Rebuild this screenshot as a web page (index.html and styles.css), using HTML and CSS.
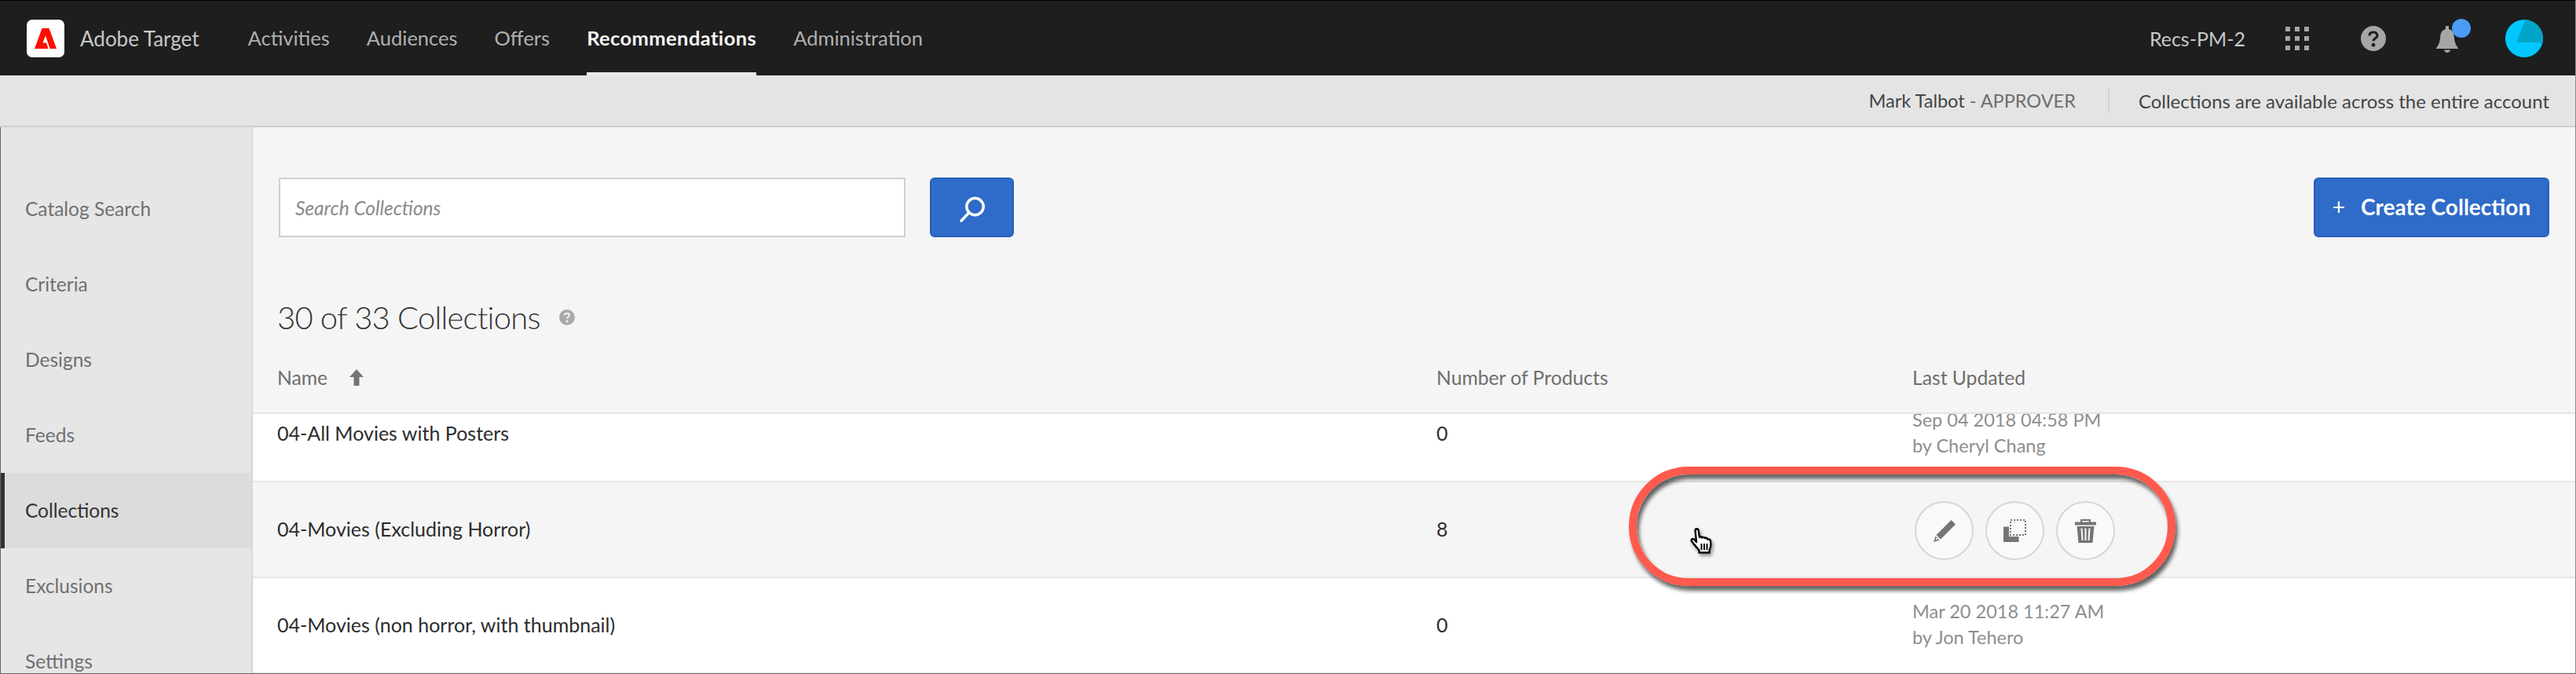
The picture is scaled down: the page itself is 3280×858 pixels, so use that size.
FILE: index.html
```html
<!DOCTYPE html>
<html lang="en">

<head>
    <meta charset="UTF-8">
    <meta name="viewport" content="width=device-width, initial-scale=1.0">
    <title>Collections - Adobe Target</title>
    <link rel="stylesheet" href="styles.css">
</head>

<body>
    <div class="app">
        <header class="topbar">
            <div class="logo">
                <svg viewBox="0 0 28 26" width="28" height="26">
                    <path fill="#fa0f00" d="M9.5 0H18.5L28 26H19.6L14 9.5L10.4 18.6H15L17.5 26H0Z" />
                </svg>
            </div>
            <span class="product">Adobe Target</span>
            <nav class="nav">
                <a class="nav-item">Activities</a>
                <a class="nav-item">Audiences</a>
                <a class="nav-item">Offers</a>
                <a class="nav-item active">Recommendations</a>
                <a class="nav-item">Administration</a>
            </nav>
            <div class="top-right">
                <span class="account">Recs-PM-2</span>
                <svg class="icon-grid" viewBox="0 0 30 30" width="30" height="30">
                    <g fill="#a6a6a6">
                        <rect x="0" y="0" width="6" height="6" /><rect x="12" y="0" width="6" height="6" /><rect x="24" y="0" width="6" height="6" />
                        <rect x="0" y="12" width="6" height="6" /><rect x="12" y="12" width="6" height="6" /><rect x="24" y="12" width="6" height="6" />
                        <rect x="0" y="24" width="6" height="6" /><rect x="12" y="24" width="6" height="6" /><rect x="24" y="24" width="6" height="6" />
                    </g>
                </svg>
                <svg class="icon-help" viewBox="0 0 32 32" width="32" height="32">
                    <circle cx="16" cy="16" r="16" fill="#a6a6a6" />
                    <path d="M11 12.5C11 9.5 13.2 8 16 8s5 1.6 5 4.2c0 3.6-5 3.6-5 7" fill="none" stroke="#1e1e1e" stroke-width="3.2" />
                    <circle cx="16" cy="24.2" r="2.4" fill="#1e1e1e" />
                </svg>
                <div class="bell">
                    <svg viewBox="0 0 28 34" width="28" height="34">
                        <path fill="#a6a6a6" d="M12 0h4v4c5 1.4 6.5 5.5 6.8 10 .3 5 1.400 9.500 5.200 14.500V29H0v-.5C3.800 23.500 4.900 19 5.200 14 5.500 9.500 7 5.400 12 4Z" />
                        <path fill="#a6a6a6" d="M10 30.500h8c-.4 2.200-2 3.500-4 3.500s-3.600-1.300-4-3.500Z" />
                    </svg>
                    <span class="bell-dot"></span>
                </div>
                <svg class="avatar" viewBox="0 0 48 48" width="48" height="48">
                    <circle cx="24" cy="24" r="24" fill="#00c8ff" />
                    <path fill="#00a5c9" d="M14 29L25.500 0.100A24 24 0 0 1 48 24.500 24 24 0 0 1 47 31L43 29Z" />
                </svg>
            </div>
        </header>

        <div class="subbar">
            <span class="user"><span class="user-name">Mark Talbot</span> - APPROVER</span>
            <span class="subbar-note">Collections are available across the entire account</span>
        </div>

        <div class="main">
            <aside class="sidebar">
                <a class="side-item">Catalog Search</a>
                <a class="side-item">Criteria</a>
                <a class="side-item">Designs</a>
                <a class="side-item">Feeds</a>
                <a class="side-item active">Collections</a>
                <a class="side-item">Exclusions</a>
                <a class="side-item">Settings</a>
            </aside>

            <section class="content">
                <div class="toolbar">
                    <div class="search-input">Search Collections</div>
                    <button class="search-btn">
                        <svg viewBox="0 0 32 38" width="32" height="38">
                            <circle cx="19.500" cy="18" r="10.700" fill="none" stroke="#fff" stroke-width="3.500" />
                            <path d="M11.500 26L2 36" fill="none" stroke="#fff" stroke-width="3.500" stroke-linecap="round" />
                        </svg>
                    </button>
                    <button class="create-btn"><span class="plus">+</span>Create Collection</button>
                </div>

                <h1 class="title">30 of 33 Collections
                    <svg class="title-help" viewBox="0 0 20 20" width="20" height="20">
                        <circle cx="10" cy="10" r="10" fill="#a9a9a9" />
                        <path d="M7 7.500C7 5.700 8.300 4.800 10 4.800s3 1 3 2.500c0 2.100-3 2.100-3 4.200" fill="none" stroke="#f5f5f5" stroke-width="2" />
                        <circle cx="10" cy="15" r="1.500" fill="#f5f5f5" />
                    </svg>
                </h1>

                <div class="table-head">
                    <div class="th">Name
                        <svg class="sort" viewBox="0 0 18 21" width="18" height="21">
                            <path fill="#747474" d="M9 0L18 10H12.500V21H5.500V10H0Z" />
                        </svg>
                    </div>
                    <div class="th">Number of Products</div>
                    <div class="th">Last Updated</div>
                </div>

                <div class="table-body">
                    <div class="row first">
                        <div class="name">04-All Movies with Posters</div>
                        <div class="count">0</div>
                        <div class="updated">Sep 04 2018 04:58 PM<br>by Cheryl Chang</div>
                    </div>
                    <div class="row hover">
                        <div class="name">04-Movies (Excluding Horror)</div>
                        <div class="count">8</div>
                        <div class="actions">
                            <button class="round-btn">
                                <svg viewBox="0 0 28 28" width="28" height="28">
                                    <path fill="#747474" d="M22.500 0L28 5.500 9 24.500 3.500 19Z" />
                                    <path fill="#747474" d="M2.500 20.500L7.500 25.500 0 28Z" />
                                    <path fill="#f8f8f8" d="M3.400 22.400L5.600 24.600 2.500 25.500Z" />
                                </svg>
                            </button>
                            <button class="round-btn">
                                <svg viewBox="0 0 29 29" width="29" height="29">
                                    <path fill="#747474" d="M0 9.500H7V22H19.500V29H0Z" />
                                    <rect x="9" y="1" width="19" height="19" fill="none" stroke="#747474" stroke-width="2" stroke-dasharray="2 2" />
                                </svg>
                            </button>
                            <button class="round-btn">
                                <svg viewBox="0 0 27 30" width="27" height="30">
                                    <path fill="none" stroke="#747474" stroke-width="2" d="M8 4V1H19V4" />
                                    <path fill="#747474" d="M0 3.500H27V7.500H0Z" />
                                    <path fill="#747474" d="M2.500 9H24.500L22.500 30H4.500Z" />
                                    <path stroke="#f8f8f8" stroke-width="2" d="M8.500 11.500L9.500 27M13.500 11.500V27M18.500 11.500L17.500 27" />
                                </svg>
                            </button>
                        </div>
                    </div>
                    <div class="row">
                        <div class="name">04-Movies (non horror, with thumbnail)</div>
                        <div class="count">0</div>
                        <div class="updated">Mar 20 2018 11:27 AM<br>by Jon Tehero</div>
                    </div>
                </div>
            </section>
        </div>

        <!-- annotation drawn on top of the screenshot -->
        <div class="ring"></div>
        <svg class="cursor" viewBox="0 0 32 34" width="32" height="34">
            <path fill="#fff" stroke="#000" stroke-width="2.400" stroke-linejoin="round" d="M6.500 3C6.500 .6 10.500 .6 10.500 3L12 12C13 11 14.800 11 15.300 12.500C16.300 11.500 18.200 11.800 18.800 13C19.800 12.300 21.700 12.500 22.200 14.500C23.700 14 25.500 14.800 26 16.500C26.500 20 26.500 25 24.500 28.500V31.500H11.500V28.500C8.500 25 5 21 2 17C.8 15 3 13 5 14.500L8 18Z" />
            <path stroke="#000" stroke-width="2" d="M14.500 20V28M18 20V28M21.500 20V28" />
        </svg>
    </div>
</body>

</html>
```
FILE: styles.css
```css
* {
    box-sizing: border-box;
}

body {
    margin: 0;
    background: #fff;
    font-family: "Lato", "Liberation Sans", sans-serif;
    font-size: 24px;
    overflow: hidden;
}

.app {
    position: relative;
    width: 3280px;
    height: 858px;
    display: flex;
    flex-direction: column;
    overflow: hidden;
    border-right: 1px solid #8a8a8a;
    border-bottom: 1px solid #666;
}

/* top bar */
.topbar {
    height: 96px;
    flex: none;
    display: flex;
    align-items: center;
    background: #1e1e1e;
    border-top: 1px solid #000;
    padding-left: 34px;
    padding-right: 41px;
    color: #c8c8c8;
}

.logo {
    width: 48px;
    height: 48px;
    background: #fff;
    border-radius: 7px;
    display: flex;
    align-items: center;
    justify-content: center;
}

.product {
    margin-left: 20px;
    font-size: 26px;
    color: #c8c8c8;
}

.nav {
    display: flex;
    align-self: stretch;
    margin-left: 62px;
    gap: 47px;
    font-size: 25.5px;
}

.nav-item {
    display: flex;
    align-items: center;
    color: #b0b0b0;
    border-bottom: 4px solid transparent;
    padding-top: 3px;
}

.nav-item.active {
    color: #f5f5f5;
    font-weight: 700;
    letter-spacing: 0.4px;
    border-bottom-color: #e8e8e8;
}

.top-right {
    margin-left: auto;
    display: flex;
    align-items: center;
}

.account {
    margin-right: 51px;
    font-size: 25px;
}

.icon-help {
    margin-left: 66px;
}

.bell {
    position: relative;
    display: flex;
    margin-left: 64px;
    margin-top: 2px;
}

.bell-dot {
    position: absolute;
    left: 20px;
    top: -9px;
    width: 24px;
    height: 24px;
    border-radius: 50%;
    background: #4b9cf5;
}

.avatar {
    margin-left: 60px;
}

/* sub bar */
.subbar {
    height: 66px;
    flex: none;
    display: flex;
    align-items: center;
    justify-content: flex-end;
    padding-right: 33px;
    background: #e4e4e4;
    border-bottom: 2px solid #d0d0d0;
    color: #6e6e6e;
}

.user {
    padding-right: 41px;
    height: 32px;
    line-height: 32px;
    font-size: 23.5px;
    border-right: 2px solid #d4d4d4;
}

.user-name {
    color: #444;
}

.subbar-note {
    margin-left: 37px;
    color: #444;
}

/* side nav */
.main {
    flex: 1;
    display: flex;
    min-height: 0;
}

.sidebar {
    width: 322px;
    flex: none;
    padding-top: 56px;
    background: #e6e6e6;
    border-right: 2px solid #d8d8d8;
    border-left: 1px solid #666;
    overflow: hidden;
}

.side-item {
    display: flex;
    align-items: center;
    height: 96px;
    flex: none;
    padding-left: 31px;
    padding-bottom: 2px;
    font-size: 24.5px;
    color: #707070;
}

.side-item.active {
    margin-left: -1px;
    padding-left: 26px;
    border-left: 6px solid #333;
    background: #dcdcdc;
    color: #333;
}

/* collections list */
.content {
    flex: 1;
    min-width: 0;
    display: flex;
    flex-direction: column;
    background: #f5f5f5;
}

.toolbar {
    display: flex;
    align-items: stretch;
    height: 76px;
    flex: none;
    margin-top: 64px;
    padding-left: 33px;
    padding-right: 33px;
}

.search-input {
    width: 798px;
    display: flex;
    align-items: center;
    padding-left: 19px;
    background: #fff;
    border: 2px solid #d0d0d0;
    font-size: 24.5px;
    font-style: italic;
    color: #8a8a8a;
}

.search-btn {
    width: 107px;
    margin-left: 31px;
    padding: 0;
    display: flex;
    align-items: center;
    justify-content: center;
    background: #2f6bc9;
    border: 2px solid #2560bb;
    border-radius: 6px;
}

.create-btn {
    margin-left: auto;
    width: 300px;
    display: flex;
    align-items: center;
    justify-content: center;
    padding: 0 0 2px;
    background: #2f6bc9;
    border: 2px solid #2560bb;
    border-radius: 6px;
    color: #fff;
    font-family: inherit;
    font-size: 28px;
    font-weight: 700;
}

.plus {
    margin-right: 20px;
    font-weight: 400;
}

.title {
    margin: 79px 0 0 31px;
    height: 46px;
    flex: none;
    display: flex;
    align-items: center;
    font-size: 40px;
    font-weight: 300;
    letter-spacing: -0.8px;
    color: #333;
}

.title-help {
    margin-left: 24px;
}

.table-head {
    height: 100px;
    flex: none;
    padding-left: 31px;
    padding-top: 8px;
    display: grid;
    grid-template-columns: 1476px 606px 1fr;
    align-items: center;
    border-bottom: 2px solid #e4e4e4;
    font-size: 24.7px;
}

.th {
    display: flex;
    align-items: center;
    color: #6e6e6e;
}

.sort {
    margin-left: 28px;
}

.table-body {
    flex: 1;
    min-height: 0;
    overflow: hidden;
    background: #fff;
}

.row {
    height: 122px;
    padding-left: 31px;
    display: grid;
    grid-template-columns: 1476px 606px 1fr;
    align-items: center;
    background: #fff;
    border-bottom: 2px solid #e6e6e6;
    font-size: 25px;
    color: #2c2c2c;
}

.row.first {
    margin-top: -35px;
}

.row.hover {
    background: #f5f5f5;
}

.name,
.count {
    padding-bottom: 3px;
}

.updated {
    color: #8e8e8e;
    font-size: 23.5px;
    line-height: 33px;
    padding-bottom: 2px;
}

.actions {
    display: flex;
    gap: 15px;
    margin-left: 3px;
    margin-top: 3px;
}

.round-btn {
    width: 75px;
    height: 75px;
    padding: 0;
    display: flex;
    align-items: center;
    justify-content: center;
    background: #f9f9f9;
    border: 2px solid #d6d6d6;
    border-radius: 50%;
}

/* red ring + hand cursor over the page */
.ring {
    position: absolute;
    left: 2074px;
    top: 594px;
    width: 696px;
    height: 152px;
    border: 10px solid #ff5a4d;
    border-radius: 76px;
    box-shadow: 3px 6px 5px rgba(0, 0, 0, 0.6), inset 3px 6px 5px rgba(0, 0, 0, 0.6);
}

.cursor {
    position: absolute;
    left: 2152px;
    top: 672px;
    filter: drop-shadow(2px 3px 2px rgba(0, 0, 0, 0.4));
}
```
